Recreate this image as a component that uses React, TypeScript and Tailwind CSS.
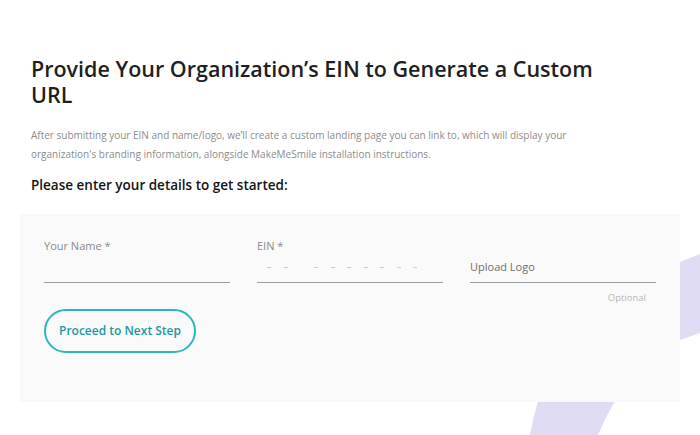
import React from "react";

const FONT = { fontFamily: "'Open Sans', 'Noto Sans', sans-serif" };

function Swoosh() {
  return (
    <svg
      aria-hidden
      className="pointer-events-none absolute left-0 top-0"
      width="700"
      height="435"
      viewBox="0 0 700 435"
    >
      <path d="M700 254 L680 262 L680 340 L700 333 Z" fill="#e0dcf3" />
      <path
        d="M538 401 L615 401 Q605 418 598 435 L530 435 Q533 418 538 401 Z"
        fill="#e0dcf3"
      />
    </svg>
  );
}

function Field({
  label,
  placeholder,
  hint,
}: {
  label?: string;
  placeholder?: React.ReactNode;
  hint?: string;
}) {
  return (
    <div className="flex flex-col">
      <div className="h-[14px] text-[11px] leading-[14px] text-[#8a8a8a]">
        {label}
      </div>
      <div className="flex h-[30px] items-center border-b border-[#9e9e9e]">
        {placeholder}
      </div>
      <div className="mt-[9px] h-[12px] pr-[10px] text-right text-[9.5px] leading-[12px] text-[#b8b8b8]">
        {hint}
      </div>
    </div>
  );
}

function EinMask() {
  const group = (n: number) =>
    Array.from({ length: n }).map((_, i) => (
      <span key={i} className="h-[1px] w-[4px] bg-[#cfcfcf]" />
    ));
  return (
    <div className="flex items-center pl-[10px]">
      <div className="flex gap-[13px]">{group(2)}</div>
      <div className="ml-[26px] flex gap-[12.5px]">{group(7)}</div>
    </div>
  );
}

export default function App() {
  return (
    <div
      className="relative h-[435px] w-[700px] overflow-hidden bg-white"
      style={FONT}
    >
      <Swoosh />
      <div className="relative px-[31px] pt-[56px]">
        <h1 className="max-w-[575px] text-[21.5px] font-semibold leading-[26px] text-[#1f1f1f]">
          Provide Your Organization’s EIN to Generate a Custom URL
        </h1>
        <p className="mt-[18px] max-w-[545px] text-[10px] leading-[19px] text-[#8c8c8c]">
          After submitting your EIN and name/logo, we’ll create a custom landing
          page you can link to, which will display your organization's branding
          information, alongside MakeMeSmile installation instructions.
        </p>
        <h2 className="mt-[11px] text-[13.5px] font-semibold leading-[20px] text-[#141414]">
          Please enter your details to get started:
        </h2>
      </div>
      <div className="relative ml-[20px] mt-[19px] h-[188px] w-[660px] bg-[#fafafa] px-[24px] pt-[25px]">
        <div className="grid grid-cols-3 gap-[27px]">
          <Field label="Your Name *" />
          <Field label="EIN *" placeholder={<EinMask />} />
          <Field
            placeholder={
              <span className="text-[11px] text-[#6f6f6f]">Upload Logo</span>
            }
            hint="Optional"
          />
        </div>
        <button className="mt-[5px] flex h-[44px] w-[152px] items-center justify-center rounded-full border-2 border-[#2bb5c0] text-[12px] font-semibold text-[#1a98a3]">
          Proceed to Next Step
        </button>
      </div>
    </div>
  );
}
